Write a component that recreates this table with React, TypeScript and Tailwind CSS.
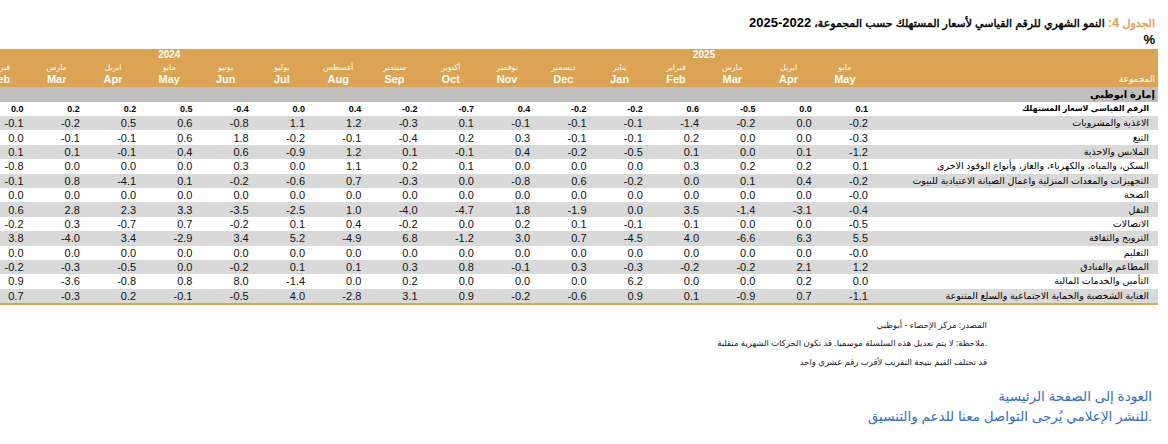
import React from "react";

type Month = { ar: string; en: string };

const months: Month[] = [
  { ar: "مايو", en: "May" },
  { ar: "ابريل", en: "Apr" },
  { ar: "مارس", en: "Mar" },
  { ar: "فبراير", en: "Feb" },
  { ar: "يناير", en: "Jan" },
  { ar: "ديسمبر", en: "Dec" },
  { ar: "نوفمبر", en: "Nov" },
  { ar: "أكتوبر", en: "Oct" },
  { ar: "سبتمبر", en: "Sep" },
  { ar: "أغسطس", en: "Aug" },
  { ar: "يوليو", en: "Jul" },
  { ar: "يونيو", en: "Jun" },
  { ar: "مايو", en: "May" },
  { ar: "ابريل", en: "Apr" },
  { ar: "مارس", en: "Mar" },
  { ar: "فبراير", en: "Feb" },
  { ar: "يناير", en: "Jan" },
];

// values listed from Feb 2024 (left) to May 2025 (right)
const totalRow = "0.0 0.2 0.2 0.5 -0.4 0.0 0.4 -0.2 -0.7 0.4 -0.2 -0.2 0.6 -0.5 0.0 0.1";

const rows: { label: string; values: string }[] = [
  { label: "الاغذية والمشروبات", values: "-0.1 -0.2 0.5 0.6 -0.8 1.1 1.2 -0.3 0.1 -0.1 -0.1 -0.1 -1.4 -0.2 0.0 -0.2" },
  { label: "التبغ", values: "0.0 -0.1 -0.1 0.6 1.8 -0.2 -0.1 -0.4 0.2 0.3 -0.1 -0.1 0.2 0.0 0.0 -0.3" },
  { label: "الملابس والاحذية", values: "0.1 0.1 -0.1 0.4 0.6 -0.9 1.2 0.1 -0.1 0.4 -0.2 -0.5 0.1 0.0 0.1 -1.2" },
  { label: "السكن، والمياه، والكهرباء، والغاز، وأنواع الوقود الاخرى", values: "-0.8 0.0 0.0 0.0 0.3 0.0 1.1 0.2 0.1 0.0 0.0 0.0 0.3 0.2 0.2 0.1" },
  { label: "التجهيزات والمعدات المنزلية واعمال الصيانة الاعتيادية للبيوت", values: "-0.1 0.8 -4.1 0.1 -0.2 -0.6 0.7 -0.3 0.0 -0.8 0.6 -0.2 0.0 0.1 0.4 -0.2" },
  { label: "الصحة", values: "0.0 0.0 0.0 0.0 0.0 0.0 0.0 0.0 0.0 0.0 0.0 0.0 0.0 0.0 0.0 -0.0" },
  { label: "النقل", values: "0.6 2.8 2.3 3.3 -3.5 -2.5 1.0 -4.0 -4.7 1.8 -1.9 0.0 3.5 -1.4 -3.1 -0.4" },
  { label: "الاتصالات", values: "-0.2 0.3 -0.7 0.7 -0.2 0.1 0.4 -0.2 0.0 0.2 0.1 -0.1 0.1 0.0 0.0 -0.5" },
  { label: "الترويح والثقافة", values: "3.8 -4.0 3.4 -2.9 3.4 5.2 -4.9 6.8 -1.2 3.0 0.7 -4.5 4.0 -6.6 6.3 5.5" },
  { label: "التعليم", values: "0.0 0.0 0.0 0.0 0.0 0.0 0.0 0.0 0.0 0.0 0.0 0.0 0.0 0.0 0.0 -0.0" },
  { label: "المطاعم والفنادق", values: "-0.2 -0.3 -0.5 0.0 -0.2 0.1 0.1 0.3 0.8 -0.1 0.3 -0.3 -0.2 -0.2 2.1 1.2" },
  { label: "التأمين والخدمات المالية", values: "0.9 -3.6 -0.8 0.8 8.0 -1.4 0.0 0.2 0.0 0.0 0.0 6.2 0.0 0.0 0.2 0.0" },
  { label: "العناية الشخصية والحماية الاجتماعية والسلع المتنوعة", values: "0.7 -0.3 0.2 -0.1 -0.5 4.0 -2.8 3.1 0.9 -0.2 -0.6 0.9 0.1 -0.9 0.7 -1.1" },
];

// DOM order is right-to-left: May 2025 first, then older months; Jan 2024 is empty
const toCells = (s: string) => [...s.split(" ").reverse(), ""];

export default function App() {
  return (
    <div className="w-[1168px] h-[444px] overflow-hidden bg-white font-['Liberation_Sans','DejaVu_Sans',sans-serif] text-black">
      <div dir="rtl" className="pr-[10px]">
        <div className="pt-[14px] pr-[3px] text-[11px] font-normal leading-[18px] whitespace-nowrap [-webkit-text-stroke:0.45px]">
          <span className="text-[#dca452]">
            الجدول <span className="text-[13px] font-bold [-webkit-text-stroke:0px]">4:</span>{" "}
          </span>
          النمو الشهري للرقم القياسي لأسعار المستهلك حسب المجموعة،{" "}
          <span className="text-[13px] font-bold [-webkit-text-stroke:0px]">2022-2025</span>
        </div>
        <div className="pr-[3px] text-[13px] font-bold leading-[16px]">%</div>

        <table className="table-fixed border-collapse w-[1242.1px] mt-[1px]">
          <colgroup>
            <col className="w-[285px]" />
            {months.map((_, i) => (
              <col key={i} className="w-[56.3px]" />
            ))}
          </colgroup>
          <thead className="bg-[#dca452] text-white">
            <tr className="h-[12px]">
              <th rowSpan={3} className="p-0 pr-[3px] pb-[2px] align-bottom text-right text-[9px] font-normal leading-[12px]">
                المجموعة
              </th>
              <th className="p-0" />
              <th colSpan={4} className="p-0 text-center text-[10px] font-bold leading-[12px]">2025</th>
              <th colSpan={3} className="p-0" />
              <th colSpan={9} className="p-0 text-center text-[10px] font-bold leading-[12px]">2024</th>
            </tr>
            <tr className="h-[12px]">
              {months.map((m, i) => (
                <th key={i} className="p-0 pt-[2px] text-center text-[8px] font-normal leading-[10px] whitespace-nowrap">
                  {m.ar}
                </th>
              ))}
            </tr>
            <tr className="h-[14px]">
              {months.map((m, i) => (
                <th key={i} className="p-0 pb-[1px] text-center text-[11px] font-bold leading-[13px]">
                  {m.en}
                </th>
              ))}
            </tr>
          </thead>
          <tbody>
            <tr className="h-[15px] bg-[#bfbfbf]">
              <td className="p-0 pr-[3px] text-right text-[10px] font-bold leading-[15px] whitespace-nowrap">إمارة ابوظبي</td>
              <td colSpan={17} className="p-0" />
            </tr>
            <tr className="h-[14px] bg-white">
              <td className="p-0 pr-[9px] text-right text-[8px] font-bold leading-[14px] whitespace-nowrap">
                الرقم القياسي لاسعار المستهلك
              </td>
              {toCells(totalRow).map((v, i) => (
                <td key={i} dir="ltr" className="p-0 pr-[5px] text-right text-[9px] font-bold leading-[14px]">
                  {v}
                </td>
              ))}
            </tr>
            {rows.map((r, ri) => (
              <tr
                key={ri}
                className={`h-[14.4px] ${ri % 2 === 0 ? "bg-[#d9d9d9]" : "bg-white"} ${
                  ri === rows.length - 1 ? "border-b-2 border-[#dca452]" : ""
                }`}
              >
                <td className="p-0 pr-[9px] text-right text-[9.5px] leading-[14px] whitespace-nowrap overflow-hidden">
                  {r.label}
                </td>
                {toCells(r.values).map((v, i) => (
                  <td key={i} dir="ltr" className="p-0 pr-[5px] text-right text-[11px] leading-[14px] text-[#111]">
                    {v}
                  </td>
                ))}
              </tr>
            ))}
          </tbody>
        </table>

        <div className="mt-[11px] mr-[171px] text-[8.5px] leading-[18.5px] text-[#222]">
          <div>المصدر: مركز الإحصاء - أبوظبي</div>
          <div>.ملاحظة: لا يتم تعديل هذه السلسلة موسميا. قد تكون الحركات الشهرية متقلبة</div>
          <div>قد تختلف القيم نتيجة التقريب لأقرب رقم عشري واحد</div>
        </div>

        <div className="mt-[16px] mr-[-4px] pr-[10px] text-[13.5px] leading-[20px] text-[#2f6fcf]">
          <div>العودة إلى الصفحة الرئيسية</div>
          <div>.للنشر الإعلامي يُرجى التواصل معنا للدعم والتنسيق</div>
        </div>
      </div>
    </div>
  );
}
